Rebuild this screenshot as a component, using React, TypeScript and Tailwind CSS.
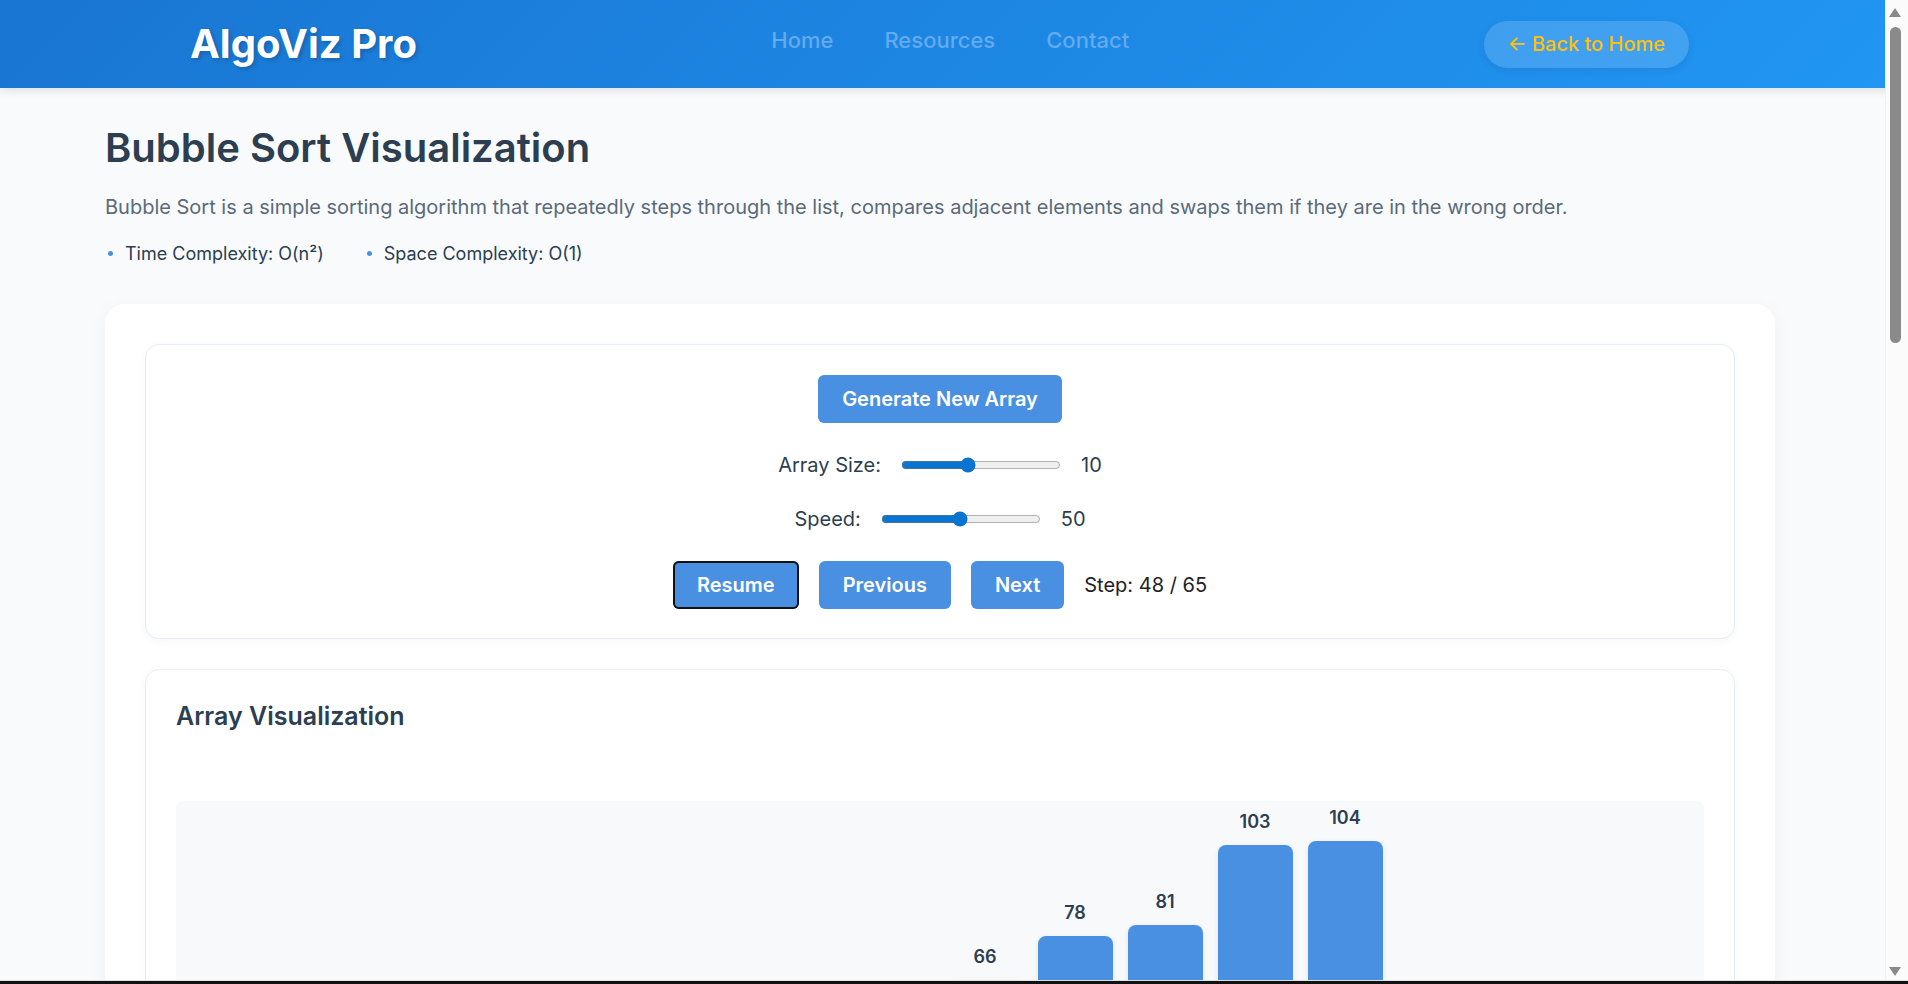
import { useState } from 'react'

const bars = [23, 45, 12, 38, 51, 66, 78, 81, 103, 104]
const maxValue = 104

function Header() {
  return (
    <header className="h-[88px] bg-[linear-gradient(135deg,#1976d2,#2196f3)] shadow-[0_2px_10px_rgba(0,0,0,0.12)]">
      <div className="ml-[190px] w-[1499px] h-full flex items-center justify-between">
        <h1 className="text-[40px] font-bold text-white [text-shadow:2px_2px_4px_rgba(0,0,0,0.2)]">
          AlgoViz Pro
        </h1>
        <nav className="flex items-center gap-[51px] mb-[7px] text-[22px] font-medium text-[#62abee]">
          <a href="#">Home</a>
          <a href="#">Resources</a>
          <a href="#">Contact</a>
        </nav>
        <a
          href="#"
          className="h-[47px] px-6 rounded-full bg-white/15 text-[#ffc107] text-[20px] font-medium flex items-center shadow-[0_2px_8px_rgba(0,0,0,0.08)]"
        >
          ← Back to Home
        </a>
      </div>
    </header>
  )
}

function Btn({ children, focused }: { children: React.ReactNode; focused?: boolean }) {
  return (
    <button
      className={
        focused
          ? 'h-12 px-6 rounded-md bg-[#4a90e2] text-white text-[20px] font-semibold ring-2 ring-inset ring-[#111]'
          : 'h-12 px-6 rounded-md bg-[#4a90e2] text-white text-[20px] font-semibold'
      }
    >
      {children}
    </button>
  )
}

function Controls() {
  const [size, setSize] = useState(10)
  const [speed, setSpeed] = useState(50)
  return (
    <div className="bg-white rounded-[14px] border border-[#e6eef9] shadow-[0_2px_10px_rgba(0,0,0,0.04)] px-[30px] pt-[30px] pb-[29px] flex flex-col items-center text-[20px] text-[#2c3e50]">
      <Btn>Generate New Array</Btn>
      <div className="mt-[27px] h-[30px] flex items-center gap-5">
        <label>Array Size:</label>
        <input
          type="range"
          min={3}
          max={20}
          value={size}
          onChange={(e) => setSize(Number(e.target.value))}
          className="w-[160px] accent-[#0a74d0]"
        />
        <span>{size}</span>
      </div>
      <div className="mt-[24px] h-[30px] flex items-center gap-5">
        <label>Speed:</label>
        <input
          type="range"
          min={1}
          max={100}
          value={speed}
          onChange={(e) => setSpeed(Number(e.target.value))}
          className="w-[160px] accent-[#0a74d0]"
        />
        <span>{speed}</span>
      </div>
      <div className="mt-[27px] flex items-center gap-5">
        <Btn focused>Resume</Btn>
        <Btn>Previous</Btn>
        <Btn>Next</Btn>
        <span className="text-[#222]">Step: 48 / 65</span>
      </div>
    </div>
  )
}

function ArrayViz() {
  return (
    <div className="bg-white rounded-[14px] border border-[#e6eef9] shadow-[0_2px_10px_rgba(0,0,0,0.04)] p-[30px]">
      <h3 className="text-[25px] font-semibold text-[#2c3e50] leading-[32px]">Array Visualization</h3>
      <div className="mt-[69px] h-[440px] rounded-lg bg-[#f8f9fa] pb-5 flex items-end justify-center gap-[15px]">
        {bars.map((v, i) => (
          <div
            key={i}
            className="relative w-[75px] rounded-t-lg bg-[#4a90e2] shadow-[0_2px_6px_rgba(0,0,0,0.08)]"
            style={{ height: `${(v / maxValue) * 380}px` }}
          >
            <span className="absolute -top-[37px] left-0 right-0 text-center text-[18px] leading-[27px] font-semibold text-[#2c3e50]">
              {v}
            </span>
          </div>
        ))}
      </div>
      <div className="mt-6 flex justify-center gap-8 text-[16px] text-[#555]">
        <div className="flex items-center gap-2">
          <span className="w-4 h-4 rounded bg-[#4a90e2]" />
          Unsorted
        </div>
        <div className="flex items-center gap-2">
          <span className="w-4 h-4 rounded bg-[#f5a623]" />
          Comparing
        </div>
        <div className="flex items-center gap-2">
          <span className="w-4 h-4 rounded bg-[#e74c3c]" />
          Swapping
        </div>
        <div className="flex items-center gap-2">
          <span className="w-4 h-4 rounded bg-[#2ecc71]" />
          Sorted
        </div>
      </div>
    </div>
  )
}

function InfoCard({ title, children }: { title: string; children: React.ReactNode }) {
  return (
    <div className="bg-white rounded-[14px] border border-[#e6eef9] shadow-[0_2px_10px_rgba(0,0,0,0.04)] p-[30px]">
      <h3 className="text-[25px] font-semibold text-[#2c3e50] mb-4">{title}</h3>
      {children}
    </div>
  )
}

function WindowChrome() {
  // browser scrollbar and window edge as they appear in the capture
  return (
    <>
      <div className="fixed top-0 right-0 w-[23px] h-full bg-[#fbfbfc] border-l border-[#f0f0f2]">
        <div className="flex flex-col items-center pt-[8px] pr-[4px]">
          <svg width="12" height="9" viewBox="0 0 12 9">
            <path d="M6 0 L12 9 L0 9 Z" fill="#8a8a8a" />
          </svg>
          <div className="mt-[10px] w-[11px] h-[316px] rounded-full bg-[#8a8a8a]" />
        </div>
        <div className="absolute bottom-[8px] left-0 right-[4px] flex justify-center">
          <svg width="12" height="9" viewBox="0 0 12 9">
            <path d="M0 0 L12 0 L6 9 Z" fill="#8a8a8a" />
          </svg>
        </div>
      </div>
      <div className="fixed bottom-0 left-0 right-0 h-[4px] border-t border-[#e2e2e4] bg-[#111]" />
    </>
  )
}

export default function App() {
  return (
    <div className="min-h-[2980px] bg-slate-50 font-['Inter',sans-serif]">
      <Header />
      <main className="ml-[105px] w-[1670px] pb-16">
        <h2 className="mt-[36px] text-[40px] leading-[48px] font-semibold text-[#2c3e50]">
          Bubble Sort Visualization
        </h2>
        <p className="mt-[21px] text-[20px] leading-[28px] text-[#5a6a7b]">
          Bubble Sort is a simple sorting algorithm that repeatedly steps through the list, compares adjacent elements and swaps them if they are in the wrong order.
        </p>
        <ul className="mt-[19px] flex gap-[40px] text-[18px] leading-[27px] text-[#2c3e50]">
          <li className="flex items-center gap-3 pl-[3px]">
            <span className="w-[5px] h-[5px] rounded-full bg-[#4a90e2]" />
            Time Complexity: O(n²)
          </li>
          <li className="flex items-center gap-3 pl-[3px]">
            <span className="w-[5px] h-[5px] rounded-full bg-[#4a90e2]" />
            Space Complexity: O(1)
          </li>
        </ul>
        <section className="mt-[37px] bg-white rounded-[20px] shadow-[0_4px_20px_rgba(0,0,0,0.04)] p-10 flex flex-col gap-[30px]">
          <Controls />
          <ArrayViz />
          <InfoCard title="Current Step">
            <p className="text-[18px] leading-7 text-[#5a6a7b]">
              Comparing elements at index 3 and 4. Since 38 is less than 51, no swap is needed.
            </p>
          </InfoCard>
          <InfoCard title="Algorithm">
            <pre className="bg-[#1e293b] text-[#e2e8f0] rounded-lg p-6 text-[15px] leading-7 font-['Liberation_Mono',monospace]">
{`function bubbleSort(arr) {
  const n = arr.length;
  for (let i = 0; i < n - 1; i++) {
    for (let j = 0; j < n - i - 1; j++) {
      if (arr[j] > arr[j + 1]) {
        [arr[j], arr[j + 1]] = [arr[j + 1], arr[j]];
      }
    }
  }
  return arr;
}`}
            </pre>
          </InfoCard>
          <InfoCard title="How It Works">
            <ol className="list-decimal pl-6 text-[18px] leading-8 text-[#5a6a7b]">
              <li>Start at the beginning of the array.</li>
              <li>Compare each pair of adjacent elements.</li>
              <li>Swap them if the first is greater than the second.</li>
              <li>After each pass, the largest unsorted element bubbles to its final position.</li>
              <li>Repeat until no swaps are needed.</li>
            </ol>
          </InfoCard>
        </section>
      </main>
      <WindowChrome />
    </div>
  )
}
